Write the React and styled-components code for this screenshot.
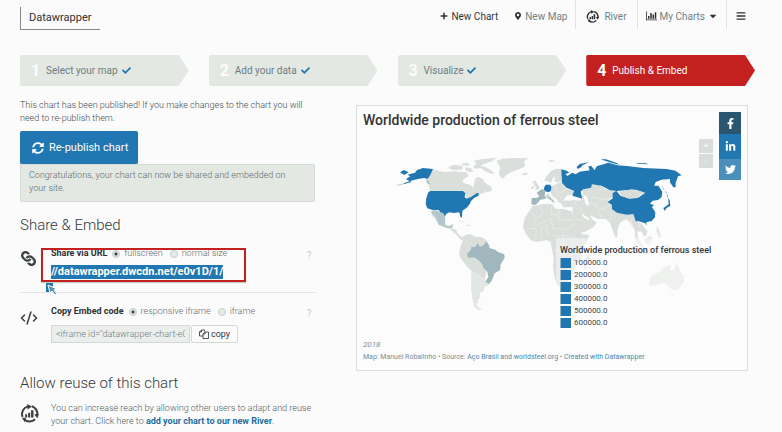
import React from "react";
import styled, { createGlobalStyle } from "styled-components";
import { FaPlus, FaMapMarkerAlt, FaCheck, FaSyncAlt, FaLink, FaBars, FaCaretDown, FaFacebookF, FaLinkedinIn, FaTwitter } from "react-icons/fa";
import { CodeXml } from "lucide-react";

const GlobalStyle = createGlobalStyle`
  * { box-sizing: border-box; }
  body {
    margin: 0;
    background: #fbfbfb;
    color: #3f4a4e;
    font-family: Roboto, "Liberation Sans", sans-serif;
    font-size: 9px;
    line-height: 13px;
  }
  button, input { font-family: inherit; }
`;

const Page = styled.div`
  padding: 0 27px 0 20px;
`;

const Header = styled.header`
  display: flex;
  justify-content: space-between;
  height: 55px;
`;

const Logo = styled.a`
  margin-top: 7px;
  width: 80px;
  height: 23px;
  padding-left: 8px;
  border: solid #85898a;
  border-width: 0 0 1px 1px;
  color: #2d3133;
  font-size: 11px;
  line-height: 21px;
  text-decoration: none;
`;

const Nav = styled.nav`
  display: flex;
  height: 29px;
`;

const NavItem = styled.a`
  display: flex;
  align-items: center;
  gap: ${(p) => p.$gap || 3}px;
  padding: 3px ${(p) => p.$pad || 8}px 0;
  border-right: ${(p) => (p.$divided ? "1px solid #dfe4e1" : "0")};
  color: ${(p) => (p.$strong ? "#333839" : "#6f7f84")};
  font-size: 10px;
  text-decoration: none;
  white-space: nowrap;
  svg { color: #2d3133; }
`;

const Menu = styled.button`
  border: 0;
  background: none;
  padding: 3px 9px 0;
  color: #2d3133;
  display: flex;
  align-items: center;
`;

const Steps = styled.nav`
  display: grid;
  grid-template-columns: repeat(4, 1fr);
  gap: 20px;
`;

const Step = styled.a`
  display: flex;
  align-items: center;
  height: 31px;
  padding-left: 11px;
  border-radius: 2px;
  background: ${(p) => (p.$active ? "#c4201f" : "#e3e8e3")};
  clip-path: polygon(0 0, calc(100% - 10px) 0, 100% 50%, calc(100% - 10px) 100%, 0 100%);
  color: ${(p) => (p.$active ? "#fff" : "#6b7d84")};
  font-size: 10px;
  text-decoration: none;
  svg { margin-left: 4px; color: #2177b1; }
`;

const StepNumber = styled.b`
  width: 15px;
  color: #fcfcfc;
  font-size: 16px;
`;

const Columns = styled.main`
  display: grid;
  grid-template-columns: 295px 1fr;
  gap: 41px;
  padding: 13px 7px 0 0;
`;

const Intro = styled.p`
  margin: 0;
  font-weight: 300;
`;

const Publish = styled.button`
  display: flex;
  align-items: center;
  gap: 5px;
  height: 33px;
  margin-top: 6px;
  padding: 0 10px 0 12px;
  border: 0;
  border-radius: 2px;
  background: #2177b1;
  box-shadow: 0 1px 1px #9fb9c3;
  color: #fff;
  font-size: 11px;
  white-space: nowrap;
`;

const Notice = styled.div`
  padding: 4px 24px 6px 8px;
  border: 1px solid #d5dcd7;
  border-radius: 2px;
  background: #e3e8e3;
  color: #5d6a6e;
  font-weight: 300;
`;

const Heading = styled.h2`
  margin: ${(p) => p.$top}px 0 0;
  color: #34393b;
  font-size: 15px;
  font-weight: 300;
  line-height: 20px;
`;

const Row = styled.section`
  position: relative;
  display: grid;
  grid-template-columns: ${(p) => (p.$wide ? "31px 1fr" : "31px 1fr 12px")};
  margin-top: ${(p) => p.$top}px;
  height: ${(p) => p.$height}px;
  border-bottom: ${(p) => (p.$divided ? "1px solid #e2e6e3" : "0")};
`;

const RowIcon = styled.div`
  margin-top: ${(p) => p.$top || 0}px;
  color: #3a3f41;
  transform: rotate(${(p) => p.$turn || 0}deg);
  width: 18px;
  height: 18px;
  display: grid;
  place-items: center;
`;

const Options = styled.div`
  display: flex;
  align-items: center;
  height: 13px;
  white-space: nowrap;
  b { color: #2d3133; font-weight: 700; }
`;

const Option = styled.label`
  display: flex;
  align-items: center;
  gap: 4px;
  margin-left: 5px;
  color: #5d6b70;
  font-weight: 300;
  & + & { margin-left: 7px; }
`;

const Radio = styled.input`
  appearance: none;
  width: 8px;
  height: 8px;
  margin: 0;
  border: 1px solid #c3cdcc;
  border-radius: 50%;
  background: #e6eae7;
  &:checked { background: radial-gradient(#3d4648 0 1px, #dfe4e2 2px); }
`;

const Help = styled.button`
  border: 0;
  padding: 0;
  margin-top: 2px;
  height: 12px;
  background: none;
  color: #c9d0cd;
  font-size: 10px;
`;

const Url = styled.a`
  display: inline-block;
  margin-top: 5px;
  height: 14px;
  background: #2177b1;
  color: #fff;
  font-size: 11px;
  font-weight: 700;
  line-height: 14px;
  text-decoration: none;
`;

const Marker = styled.div`
  position: absolute;
  left: 21px;
  top: 1px;
  width: 205px;
  height: 34px;
  border: 2px solid #c4201f;
  box-shadow: 0 1px 1px #c8cdca;
`;

const Pointer = styled.svg`
  position: absolute;
  left: 26px;
  top: 36px;
`;

const CodeLine = styled.div`
  display: flex;
  gap: 1px;
  margin-top: 7px;
`;

const CodeBox = styled.input`
  width: 139px;
  height: 18px;
  padding: 0 4px;
  border: 1px solid #d3dad6;
  background: #eceeec;
  color: #6c7b81;
  font-size: 9px;
  font-weight: 300;
`;

const Copy = styled.button`
  display: flex;
  align-items: center;
  gap: 2px;
  height: 18px;
  padding: 0 7px;
  border: 1px solid #d3dad6;
  border-radius: 2px;
  background: #fbfbfb;
  color: #33393b;
  font-size: 9px;
`;

const Reuse = styled.p`
  margin: 0;
  color: #4f5c60;
  font-weight: 300;
  a { color: #226f9f; font-weight: 700; text-decoration: none; }
`;

const Card = styled.article`
  position: relative;
  align-self: start;
  margin-top: 6px;
  border: 1px solid #d9dddb;
  background: #fcfcfc;
`;

const CardTitle = styled.h1`
  margin: 0;
  padding: 5px 6px 0;
  height: 34px;
  color: #333;
  font-size: 14px;
  font-weight: 500;
  line-height: 18px;
`;

const MapArea = styled.div`
  position: relative;
`;

const MapSvg = styled.svg`
  display: block;
  width: 100%;
`;

const Legend = styled.div`
  position: absolute;
  left: 51%;
  top: 98px;
  padding: 5px 0 0 4px;
  background: rgba(252, 252, 252, 0.5);
`;

const LegendTitle = styled.h3`
  margin: 0;
  color: #33383a;
  font-size: 9px;
  font-weight: 500;
  line-height: 14px;
`;

const LegendList = styled.ul`
  margin: 0;
  padding: 0;
  list-style: none;
`;

const LegendItem = styled.li`
  display: flex;
  align-items: center;
  gap: 3px;
  height: 12px;
  font-size: 8px;
  line-height: 12px;
  &::before {
    content: "";
    width: 10px;
    height: 10px;
    background: #2177b1;
    border-left: 1px solid #8fb3c8;
  }
`;

const Footer = styled.footer`
  padding: 9px 6px 7px;
  color: #7f8d92;
  font-size: 7px;
  line-height: 12px;
  a { color: #4f87a5; text-decoration: none; }
`;

const Year = styled.div`
  font-size: 8px;
  font-style: italic;
`;

const Social = styled.div`
  position: absolute;
  top: 6px;
  right: 6px;
  width: 22px;
`;

const SocialLink = styled.a`
  display: grid;
  place-items: center;
  height: ${(p) => p.$height}px;
  background: ${(p) => p.$color};
  color: #fff;
`;

const Zoom = styled.div`
  position: absolute;
  top: 33px;
  right: 34px;
  display: grid;
  gap: 1px;
`;

const ZoomButton = styled.button`
  width: 14px;
  height: 14px;
  padding: 0;
  border: 0;
  background: #d8dddb;
  color: #f7f8f7;
  font-size: 9px;
  line-height: 12px;
`;

const RiverIcon = ({ size }) => (
  <svg width={size} height={size} viewBox="0 0 24 24" fill="none">
    <path d="M3.2 16.2A10 10 0 0 1 10 3M14.8 2.9A10 10 0 0 1 21.8 14M19 19.3A10 10 0 0 1 5.5 19.6" stroke="currentColor" strokeWidth="2.6" />
    <path d="M9 0l6 3-5.4 4zM24 12l-2 6-4-4.6zM7.500 17.400l-5 0 3.500 5.500z" fill="currentColor" />
    <path d="M6.500 13h2.600v4H6.500zM10.300 11h2.600v6h-2.600zM14 8h3v9h-3z" fill="currentColor" />
  </svg>
);

const ChartIcon = () => (
  <svg width="11" height="10" viewBox="0 0 22 20" fill="currentColor">
    <path d="M0 1h1.600v16H22v1.600H0zM4 10h3v5.500H4zM8.500 4h3v11.500h-3zM13 7h3v8.500h-3zM17.500 2.500h3v13h-3z" />
  </svg>
);

const CopyIcon = () => (
  <svg width="10" height="10" viewBox="0 0 20 20" fill="none" stroke="currentColor" strokeWidth="1.700">
    <path d="M8 14H1V6l4-4h6v3M5 2v4H1M8 10l4-4h7v13H8zM12 6v4H8" />
  </svg>
);

const borders = "M55 166L70 185 56 205M96 168L92 190 115 200M28 180L50 205 40 225M115 182V210H160M50 225L75 215 92 205 100 235M20 235H48V270M65 225V262M80 225L84 258M100 235L140 238 165 220M100 258H150L155 275M130 240V300M160 255V310M100 300H160M125 330L165 340";

const WorldMap = () => (
  <MapSvg viewBox="-114 -30 1170 570" role="img" aria-label="World map of ferrous steel production">
    <g fill="#dadfdc">
      <path d="M113 57L130 62 150 66 180 64 214 67 222 78 206 88 203 96 212 101 228 105 233 114 238 100 240 86 250 80 264 88 270 98 288 110 291 122 278 126 268 124 270 130 250 132 215 147 208 124H105L101 104 104 98 98 86z" />
      <path d="M160 50l18-6 24 4 2 10-22 3-18-4zM196 41l22-2 8 7-20 1zM236 32l30-6 40-2-16 10-24 8-10 6 18 4 16 10 8 10-14-2-16-8-12-8-16 2-6-6 10-8zM210 52l16 2 10 10-12 3-12-6z" />
      <path d="M304 33L322 26 352 24 400 25 386 35 391 48 376 56 350 66 335 74 325 85 316 82 311 68 316 54 310 42z" />
      <path d="M380 71l8-3 11 2-3 5-12 1zM458 33l12-4 10 4-9 4zM192 210l14 5 6 5-18-7zM214 224l14 2-2 3-12-2z" />
      <path d="M160 234L175 236 184 240 187 250 202 262 210 256 225 252 240 260 259 261 276 272 283 291 284 330 276 360 270 384 272 397 281 406 268 410 267 422 254 429 256 442 248 448 248 458 241 463 249 471 260 478 250 479 238 470 233 448 229 419 230 363 217 351 197 325 192 312 196 292 203 272 195 266 183 253 168 241z" />
      <g transform="translate(375 0)">
        <path d="M73 93L78 82 92 64 107 57 122 56 129 68 124 82 126 92 112 98 103 93 105 80 98 84 96 94 91 100 85 94zM37 96l8-5 5 7 7 10 2 8-14 5 3-8zM36 108l6 1-2 8-7-1z" />
        <path d="M94 108L112 101 126 94 137 116 160 121 157 136 142 136 136 142 130 152 128 160 118 159 110 148 96 137 92 124zM76 138l8-8 6 8 12 12 2 8-5 1-4-9-11-8z" />
        <path d="M121 154L150 149 178 152 189 146 186 136 190 130 186 120 190 113 212 112 216 103 240 105 262 120 290 125 281 138 264 151 277 177 340 193 346 212 364 221 374 234 382 243 379 257 371 258 365 245 352 244 354 264 365 280 358 282 346 262 344 239 330 218 319 207 301 217 294 235 291 262 286 260 277 240 270 218 258 207 234 207 211 196 216 207 230 218 221 231 194 246 182 248 177 233 165 215 158 188 158 171 129 172z" />
        <path d="M38 168L68 162 98 163 105 176 131 177 155 184 163 207 181 233 185 253 208 255 200 274 185 300 185 328 163 350 158 375 139 398 121 412 111 405 103 378 99 351 101 322 96 300 92 276 80 270 52 275 36 273 19 255 9 232 14 204z" />
        <path d="M197 326l8-14 3 14-11 34-8-5z" />
      </g>
    </g>
    <g fill="#fcfcfc" transform="translate(375 0)">
      <path d="M190 135l9 2 5 12 4 18-10-3-5-15zM137 143l7-6 10 4 10 6-12 5-14-1zM184 191l14 8 12 8-5 4-15-9z" />
    </g>
    <g fill="none" stroke="#edf0ee" strokeWidth="2" transform="translate(375 0)">
      <path d={borders} />
      <path d="M160 155L180 175 190 194M205 155L230 165 245 205M215 140L250 150 270 145M240 178L265 170M275 190L268 212M166 205L196 216M330 205L340 235M355 220L362 240M105 100L112 130 128 150M136 120L120 130" />
    </g>
    <g fill="#e2e7e3">
      <path d="M230 363L246 369 268 385 271 397 280 406 267 411 267 422 254 430 256 443 247 449 248 458 241 463 249 471 260 478 250 479 238 470 233 448 229 419z" />
      <path d="M763 405L765 382 781 371 794 365 806 352 821 345 828 348 824 359 837 364 844 337 852 355 857 367 868 380 866 396 854 414 837 421 822 413 815 402 797 400 776 409zM828 432l8-1-3 8zM718 258l14 14 16 20-5 2-18-19zM749 267l16-9 8 5-8 18-14 1zM786 229l5 8 8 26-8-4-7-18zM801 284l17 2 25 12 9 13-16-4-16-11z" />
    </g>
    <g fill="#a0b8bd">
      <path d="M216 312L228 300 229 290 240 292 248 280 255 291 269 283 273 274 283 287 283 294 301 299 309 306 328 313 329 323 317 343 315 361 299 370 291 390 282 403 271 396 280 381 277 365 265 353 262 343 250 330 237 322 220 323z" />
      <path d="M410 144l17-1 6-5-8-10 10-7 8-4 8 7-2 13 6 7-10 4-10 1-4 7-10 9-12-2zM454 138l6 2 13 11 4 8-7-7-12-8z" />
      <path d="M110 182L126 182 144 190 151 204 150 223 160 229 175 223 172 233 158 235 132 225 126 214 119 200 115 189 118 206 109 188zM93 88l9 4 3 10-6 1-5-8z" opacity=".8" />
      <path d="M48 94L24 102 6 106" fill="none" stroke="#a0b8bd" strokeWidth="2" />
    </g>
    <g fill="#2177b1">
      <path d="M33 87L46 79 37 74 60 68 66 60 84 54 114 57 107 73 98 87 88 84 73 86 56 90 44 94zM15 67L27 60 41 67 28 75zM46 93l-20 7 1 2 22-6z" />
      <path d="M106 123H204L211 129 209 142 215 146 229 140 246 129 252 130 250 137 237 144 228 153 224 163 214 174 202 182 201 203 196 200 193 187 176 189 163 187 153 192 150 200 144 189 136 187 131 180 115 181 97 175 92 162 94 144 100 127z" />
      <path d="M448 112l4-8 14 0 3 8-1 10-8 5-9-3-4-6z" />
      <g transform="translate(375 0)">
        <path d="M124 58L140 62 148 68 136 72 142 78 157 68 167 73 179 65 209 61 205 49 214 48 224 61 230 49 265 38 292 46 321 48 369 54 440 57 466 62 485 76 474 79 467 99 467 112 460 112 450 97 450 87 425 89 407 96 403 107 415 107 427 125 425 141 414 150 398 152 390 161 402 165 396 171 406 187 405 202 395 213 379 217 380 227 376 220 357 214 347 214 340 192 321 194 291 188 276 177 275 164 263 156 278 145 278 130 289 122 301 137 325 145 353 144 375 129 346 119 314 121 291 123 270 121 245 107 216 103 213 113 189 118 182 125 187 146 157 137 162 122 139 113 126 98z" />
        <path d="M424 103l6 14 10 12 2 12 7 10 2 17-8 4-5 4-4 7-4-9 8-5 8-7-1-11-2-15-7-10z" />
        <path d="M170 51l9-9 27-5-17 8-9 9-8 2zM242 28l16 0 34 12 5 4-18-4-22-7zM350 39l28 1 6 3-32-2z" />
      </g>
    </g>
    <path d="M671 125L690 122 708 118 728 121 750 128 734 136 727 144 703 146 680 138z" fill="#d6ddda" />
  </MapSvg>
);

const steps = ["Select your map", "Add your data", "Visualize", "Publish & Embed"];
const values = ["100000.0", "200000.0", "300000.0", "400000.0", "500000.0", "600000.0"];

export default function App() {
  return (
    <Page>
      <GlobalStyle />
      <Header>
        <Logo href="#home">Datawrapper</Logo>
        <Nav>
          <NavItem href="#chart" $strong><FaPlus size={8} />New Chart</NavItem>
          <NavItem href="#map" $divided><FaMapMarkerAlt size={8} />New Map</NavItem>
          <NavItem href="#river" $gap={5} $pad={10} $divided><RiverIcon size={13} />River</NavItem>
          <NavItem href="#charts" $divided><ChartIcon />My Charts<FaCaretDown size={10} /></NavItem>
          <Menu aria-label="Menu"><FaBars size={10} /></Menu>
        </Nav>
      </Header>
      <Steps>
        {steps.map((name, i) => (
          <Step key={name} href={"#step" + (i + 1)} $active={i === 3}>
            <StepNumber>{i + 1}</StepNumber>
            {name}
            {i < 3 && <FaCheck size={9} />}
          </Step>
        ))}
      </Steps>
      <Columns>
        <div>
          <Intro>This chart has been published! If you make changes to the chart you will need to re-publish them.</Intro>
          <Publish><FaSyncAlt size={12} />Re-publish chart</Publish>
          <Notice>Congratulations, your chart can now be shared and embedded on your site.</Notice>
          <Heading $top={13}>Share &amp; Embed</Heading>
          <Row $top={12} $height={46} $divided>
            <RowIcon $turn={90} $top={2}><FaLink size={15} /></RowIcon>
            <div>
              <Options>
                <b>Share via URL</b>
                <Option><Radio type="radio" name="size" defaultChecked />fullscreen</Option>
                <Option><Radio type="radio" name="size" />normal size</Option>
              </Options>
              <Url href="//datawrapper.dwcdn.net/e0v1D/1/">//datawrapper.dwcdn.net/e0v1D/1/</Url>
            </div>
            <Help aria-label="Help on sharing">?</Help>
            <Marker />
            <Pointer width="13" height="13" viewBox="0 0 13 13">
              <path d="M0 0h7v9H0z" fill="#2177b1" />
              <path d="M2 2l9 4-3 1 3 4-2 1-3-4-2 2z" fill="#5d8fae" stroke="#fff" />
            </Pointer>
          </Row>
          <Row $top={12} $height={38}>
            <RowIcon $top={4}><CodeXml size={18} strokeWidth={2} /></RowIcon>
            <div>
              <Options>
                <b>Copy Embed code</b>
                <Option><Radio type="radio" name="embed" defaultChecked />responsive iframe</Option>
                <Option><Radio type="radio" name="embed" />iframe</Option>
              </Options>
              <CodeLine>
                <CodeBox aria-label="Embed code" readOnly value={'<iframe id="datawrapper-chart-e0v1D" src="//datawrapper.dwcdn.net/e0v1D/1/"></iframe>'} />
                <Copy><CopyIcon />copy</Copy>
              </CodeLine>
            </div>
            <Help aria-label="Help on embedding">?</Help>
          </Row>
          <Heading $top={30}>Allow reuse of this chart</Heading>
          <Row $top={9} $height={30} $wide>
            <RowIcon $top={2}><RiverIcon size={19} /></RowIcon>
            <Reuse>You can increase reach by allowing other users to adapt and reuse your chart. Click here to <a href="#river">add your chart to our new River</a>.</Reuse>
          </Row>
        </div>
        <Card>
          <CardTitle>Worldwide production of ferrous steel</CardTitle>
          <MapArea>
            <WorldMap />
            <Legend>
              <LegendTitle>Worldwide production of ferrous steel</LegendTitle>
              <LegendList>{values.map((v) => <LegendItem key={v}>{v}</LegendItem>)}</LegendList>
            </Legend>
          </MapArea>
          <Footer>
            <Year>2018</Year>
            Map: Manuel Robalinho • Source: <a href="#source">Aço Brasil and worldsteel.org</a> • <a href="#dw">Created with Datawrapper</a>
          </Footer>
          <Zoom>
            <ZoomButton aria-label="Zoom in">+</ZoomButton>
            <ZoomButton aria-label="Zoom out">-</ZoomButton>
          </Zoom>
          <Social>
            <SocialLink href="#facebook" aria-label="Facebook" $height={22} $color="#2b566f"><FaFacebookF size={11} /></SocialLink>
            <SocialLink href="#linkedin" aria-label="LinkedIn" $height={25} $color="#2177b1"><FaLinkedinIn size={11} /></SocialLink>
            <SocialLink href="#twitter" aria-label="Twitter" $height={21} $color="#4a8fba"><FaTwitter size={11} /></SocialLink>
          </Social>
        </Card>
      </Columns>
    </Page>
  );
}
